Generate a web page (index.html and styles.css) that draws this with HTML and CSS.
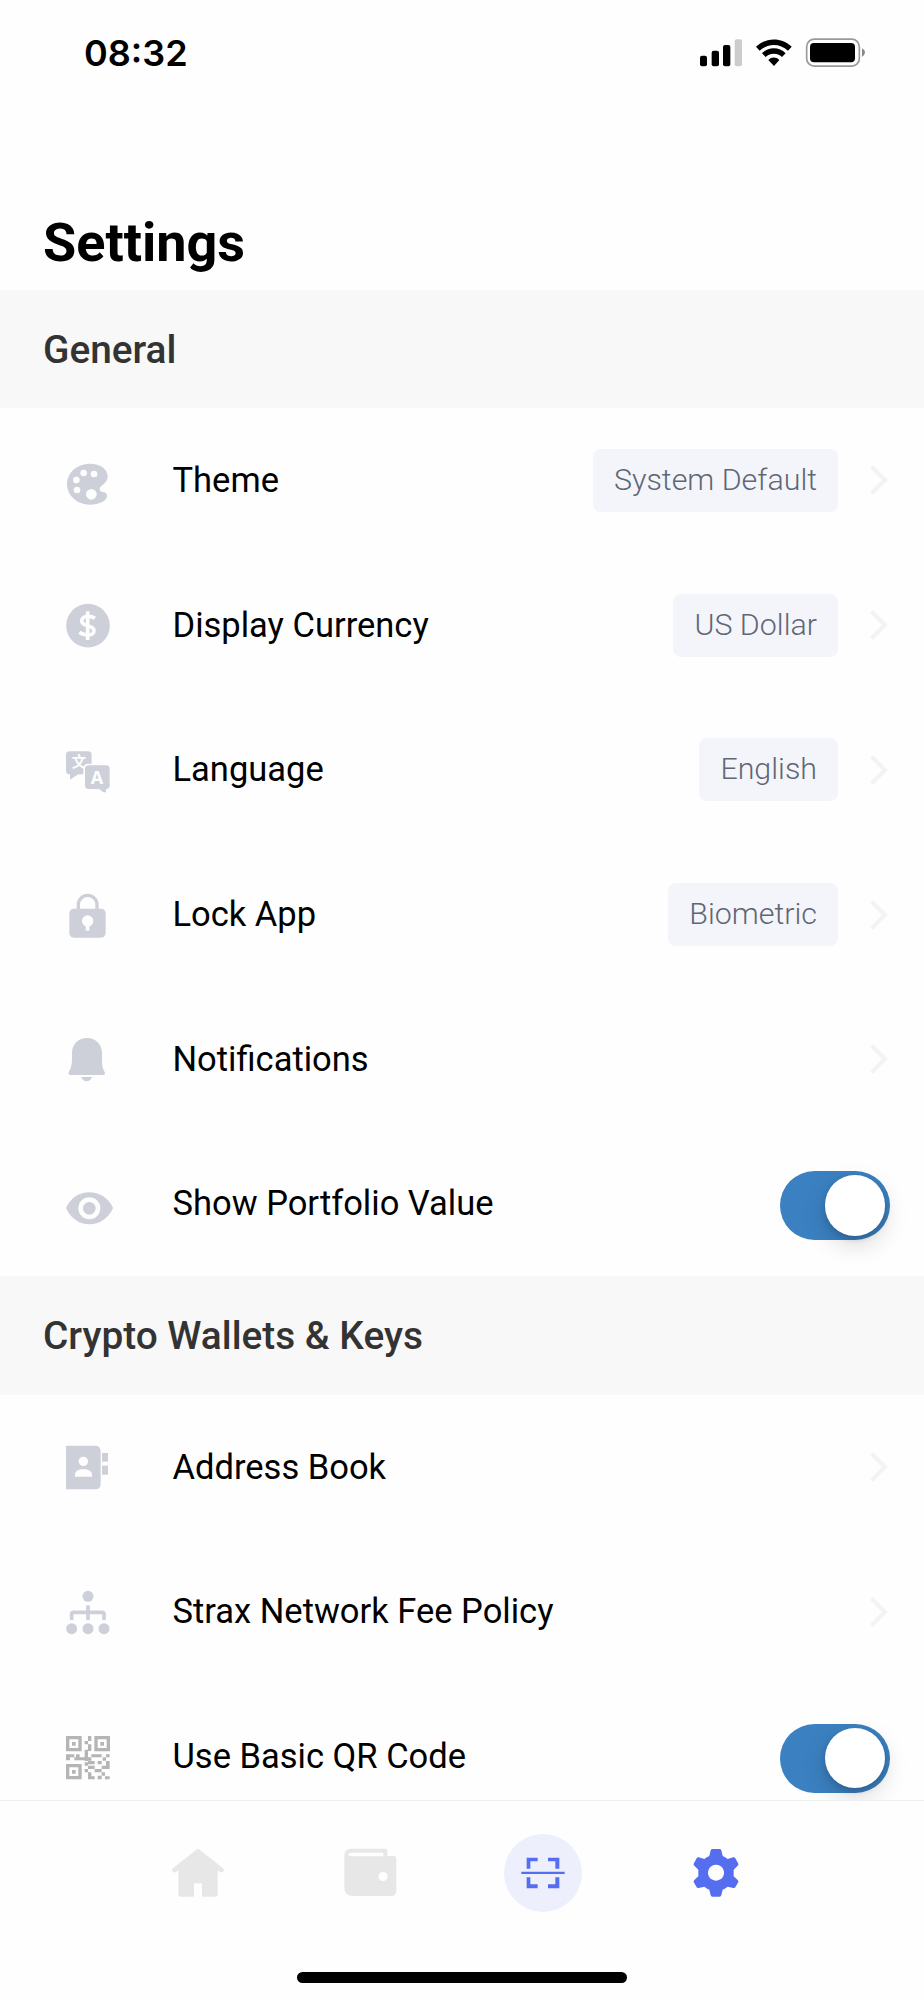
FILE: index.html
```
<!DOCTYPE html>
<html lang="en">
<head>
  <meta charset="UTF-8" />
  <meta name="viewport" content="width=device-width, initial-scale=1.0" />
  <title>Settings</title>
  <link rel="stylesheet" href="styles.css">
</head>
<body>
  <div class="app">
    <header class="status-bar">
      <span class="time">08:32</span>
      <svg class="status-icons" viewBox="420 110 498 96">
        <rect x="420" y="166" width="21" height="32" rx="6" />
        <rect x="455" y="151" width="22" height="47" rx="6" />
        <rect x="489" y="134" width="22" height="64" rx="6" />
        <rect x="524" y="117" width="22" height="81" rx="6" fill="#ccc" />
        <path d="M588 139 C618 110 665 110 695 139 L684 151 C660 128 623 128 599 151Z" />
        <path d="M606 159 C626 139 657 139 677 159 L666 170 C652 157 631 157 617 170Z" />
        <path d="M625 179 C634 169 649 169 658 179 L642 197Z" />
        <rect x="740" y="116.500" width="158" height="81" rx="23" fill="none" stroke="#999" stroke-width="5" />
        <rect x="750" y="128" width="135" height="58" rx="12" />
        <path d="M906 144 Q915 148 915 156 Q915 164 906 169Z" fill="#888" />
      </svg>
    </header>

    <h1 class="title">Settings</h1>

    <main class="content">
      <h2 class="section-title">General</h2>
      <ul class="list">
        <li class="row">
          <svg class="icon" viewBox="78 31 144 180">
            <path d="M150 72 C112 72 81 98 81 134 C81 168 112 195 150 195 C175 195 201 184 201 168 C201 160 196 158 189 157 C179 156 176 147 182 141 C192 132 203 126 203 110 C203 88 180 72 150 72Z" />
            <g class="hole">
              <circle cx="131" cy="100" r="10" />
              <circle cx="162" cy="103" r="10" />
              <circle cx="109" cy="121" r="10" />
              <circle cx="111" cy="151" r="10" />
              <circle cx="154" cy="164" r="16" />
            </g>
          </svg>
          <span class="label">Theme</span>
          <span class="value">System Default</span>
          <svg class="chevron" viewBox="0 0 18 30"><path d="M1.500 1.500 L15 15 L1.500 28.500" /></svg>
        </li>
        <li class="row">
          <svg class="icon" viewBox="78 465 144 180">
            <circle cx="144" cy="557" r="65.500" />
            <path class="cut" stroke-width="11" d="M165 535 C158 530 150 529 143 529 C132 529 125 535 125 542 C125 552 135 554 143 557 C154 560 162 563 162 572 C162 581 152 585 143 585 C133 585 126 582 118 577" />
            <path class="cut" stroke-width="11" d="M143 514 V600" />
          </svg>
          <span class="label">Display Currency</span>
          <span class="value">US Dollar</span>
          <svg class="chevron" viewBox="0 0 18 30"><path d="M1.500 1.500 L15 15 L1.500 28.500" /></svg>
        </li>
        <li class="row">
          <svg class="icon" viewBox="78 899 144 180">
            <rect x="78" y="933" width="77" height="69" rx="11" />
            <path d="M90 998 V1018 L117 1000Z" />
            <text class="glyph cjk" x="117" y="981">文</text>
            <rect class="hole" x="130" y="970" width="84" height="81" rx="14" />
            <rect x="135" y="975" width="74" height="71" rx="11" />
            <path d="M174 1044 L190 1056 H198 V1044Z" />
            <text class="glyph" x="171" y="1030">A</text>
          </svg>
          <span class="label">Language</span>
          <span class="value">English</span>
          <svg class="chevron" viewBox="0 0 18 30"><path d="M1.500 1.500 L15 15 L1.500 28.500" /></svg>
        </li>
        <li class="row">
          <svg class="icon" viewBox="78 43 144 180">
            <path class="line" stroke-width="10" d="M115 118 V102 a28 28 0 0 1 56 0 V118" />
            <rect x="88" y="114" width="109" height="87" rx="14" />
            <g class="hole">
              <circle cx="143" cy="151" r="17" />
              <rect x="137" y="160" width="11" height="20" />
            </g>
          </svg>
          <span class="label">Lock App</span>
          <span class="value">Biometric</span>
          <svg class="chevron" viewBox="0 0 18 30"><path d="M1.500 1.500 L15 15 L1.500 28.500" /></svg>
        </li>
        <li class="row">
          <svg class="icon" viewBox="78 477 144 180">
            <path d="M141 504 C115 504 96 523 96 549 V565 C96 588 92 596 86 606 Q84 614 91 615 H190 Q197 614 194 606 C188 596 186 588 186 565 V549 C186 523 167 504 141 504Z" />
            <path d="M123 621 H157 C153 629 147 634 140 634 C133 634 127 629 123 621Z" />
          </svg>
          <span class="label">Notifications</span>
          <svg class="chevron" viewBox="0 0 18 30"><path d="M1.500 1.500 L15 15 L1.500 28.500" /></svg>
        </li>
        <li class="row">
          <svg class="icon" viewBox="78 911 144 180">
            <path d="M78 1013 C92 983 118 966 148 966 C178 966 205 983 219 1013 C205 1044 178 1062 148 1062 C118 1062 92 1044 78 1013Z" />
            <circle class="hole" cx="148" cy="1014" r="33" />
            <circle cx="148" cy="1014" r="19" />
          </svg>
          <span class="label">Show Portfolio Value</span>
          <span class="toggle"><span class="thumb"></span></span>
        </li>
      </ul>

      <h2 class="section-title">Crypto Wallets &amp; Keys</h2>
      <ul class="list">
        <li class="row">
          <svg class="icon" viewBox="198 532 144 180">
            <path d="M198 558 H286 Q302 558 302 575 V672 Q302 689 286 689 H198Z" />
            <rect x="306" y="580" width="18" height="26" />
            <rect x="306" y="618" width="18" height="27" />
            <g class="hole">
              <circle cx="250" cy="605" r="14" />
              <path d="M225 651 V645 C225 635 235 629 250 629 C265 629 276 635 276 645 V651Z" />
            </g>
          </svg>
          <span class="label">Address Book</span>
          <svg class="chevron" viewBox="0 0 18 30"><path d="M1.500 1.500 L15 15 L1.500 28.500" /></svg>
        </li>
        <li class="row">
          <svg class="icon" viewBox="78 66 144 180">
            <circle cx="144" cy="109" r="16.500" />
            <circle cx="95" cy="206" r="16.500" />
            <circle cx="144" cy="206" r="16.500" />
            <circle cx="192" cy="206" r="16.500" />
            <path class="line" stroke-width="11" d="M95 180 V163 Q95 157 101 157 H187 Q192 157 192 163 V180 M144 136 V180" />
          </svg>
          <span class="label">Strax Network Fee Policy</span>
          <svg class="chevron" viewBox="0 0 18 30"><path d="M1.500 1.500 L15 15 L1.500 28.500" /></svg>
        </li>
        <li class="row">
          <svg class="icon qr" viewBox="78 500 144 180">
            <path class="line" stroke-width="10" d="M83 532 H120 V568 H83Z M168 532 H205 V568 H168Z M83 616 H120 V652 H83Z" />
            <path d="M96 545h11v11h-11z M181 545h11v11h-11z M96 629h11v11h-11z" />
            <path d="M144 527h10v15h-10z M134 542h10v10h-10z M144 552h10v20h-10z M134 568h10v34h-10z M78 582h25v9h-25z M78 591h12v9h-12z M108 582h11v9h-11z M103 591h31v9h-31z M154 582h31v9h-31z M144 591h10v10h-10z M198 582h11v9h-11z M188 591h10v10h-10z" />
            <path d="M144 602h20v10h-20z M134 606h10v10h-10z M173 602h12v10h-12z M198 602h11v24h-11z M185 616h13v10h-13z M144 616h20v10h-20z M164 626h21v10h-21z M134 626h10v10h-10z M144 636h10v21h-10z M154 648h10v9h-10z M185 636h10v10h-10z M173 646h12v11h-12z M195 648h14v9h-14z" />
          </svg>
          <span class="label">Use Basic QR Code</span>
          <span class="toggle"><span class="thumb"></span></span>
        </li>
      </ul>
    </main>

    <footer class="tab-bar">
      <nav class="tabs">
        <a class="tab">
          <svg width="52" height="48" viewBox="66 176 156 144">
            <path d="M139 178 Q144 174 149 178 L219 234 Q224 239 220 244 Q216 248 210 245 L203 240 V313 Q203 319 197 319 H156 V279 H132 V319 H91 Q85 319 85 313 V240 L78 245 Q72 248 68 244 Q64 239 69 234Z" />
          </svg>
        </a>
        <a class="tab">
          <svg width="52" height="48" viewBox="584 177 156 144">
            <path fill-rule="evenodd" d="M600 176 H706 Q711 176 711 182 V198 H732 Q738 198 738 205 V303 Q738 318 723 318 H606 Q582 316 582 293 V194 Q583 178 600 176Z M600 188 Q594 189 594 194 Q595 199 602 199 H699 V188Z M698 246 a13.500 13.500 0 1 0 .1 0Z" />
          </svg>
        </a>
        <a class="tab">
          <span class="scan">
            <svg width="44" height="32" viewBox="184 202 132 96">
              <path d="M201 204 H234 V215 H212 V237 H201Z M265 204 H299 V237 H287 V215 H265Z M201 263 H212 V284 H234 V296 H201Z M287 263 H299 V296 H265 V284 H287Z M185 246 H315 V253 H185Z" />
            </svg>
          </span>
        </a>
        <a class="tab active">
          <svg width="46" height="48" viewBox="699 176 138 144">
            <path fill-rule="evenodd" d="M757 176 H779 Q783 176 784 180 L788 197 Q796 200 803 206 L820 201 Q824 200 826 204 L835 220 Q836 224 833 226 L821 238 V258 L833 269 Q836 272 835 275 L826 291 Q824 294 820 293 L803 289 Q796 295 788 298 L784 315 Q783 319 779 319 H757 Q753 319 752 315 L748 298 Q740 295 733 289 L716 293 Q712 294 710 291 L701 275 Q700 272 703 269 L715 258 V238 L703 226 Q700 224 701 220 L710 204 Q712 200 716 201 L733 206 Q740 200 748 197 L752 180 Q753 176 757 176Z M768 223 a24 24 0 1 0 .1 0Z" />
          </svg>
        </a>
      </nav>
      <div class="home-indicator"></div>
    </footer>
  </div>
</body>
</html>
```
FILE: styles.css
```
* {
  box-sizing: border-box;
}
body {
  margin: 0;
  background: #fefefe;
  font-family: Roboto, "Liberation Sans", sans-serif;
  color: #000;
}
.app {
  display: flex;
  flex-direction: column;
  width: 924px;
  height: 2000px;
  overflow: hidden;
}
.status-bar {
  display: flex;
  justify-content: space-between;
  align-items: center;
  flex: none;
  height: 105px;
  padding: 0 58px 0 84px;
}
.time {
  font-family: Inter, sans-serif;
  font-size: 36px;
  font-weight: 600;
}
.status-icons {
  width: 166px;
  height: 32px;
}
.title {
  flex: none;
  height: 184.500px;
  margin: 0;
  padding: 106px 0 0 43px;
  font-size: 54px;
  line-height: 64px;
  font-weight: 700;
}
.content {
  flex: 1;
  min-height: 0;
  overflow: hidden;
}
.section-title {
  height: 118.500px;
  margin: 0;
  padding-left: 43px;
  background: #f8f8f8;
  color: #333;
  font-size: 38.800px;
  font-weight: 500;
  line-height: 119px;
}
.list {
  list-style: none;
  margin: 0;
  padding: 0;
}
.row {
  display: flex;
  align-items: center;
  height: 144.720px;
  padding: 0 36px 0 66px;
}
.icon {
  flex: none;
  width: 48px;
  height: 60px;
  fill: #cdd0d9;
}
.icon .hole {
  fill: #fefefe;
}
.icon .line {
  fill: none;
  stroke: #cdd0d9;
}
.icon .cut {
  fill: none;
  stroke: #fefefe;
}
.icon .glyph {
  fill: #fefefe;
  font-family: "Open Sans", sans-serif;
  font-size: 54px;
  font-weight: 700;
  text-anchor: middle;
}
.icon .cjk {
  font-family: "Noto Sans CJK SC", sans-serif;
  font-size: 43px;
}
.icon.qr {
  fill: #b5b5b5;
}
.icon.qr .line {
  stroke: #b5b5b5;
}
.label {
  flex: 1;
  margin-left: 58.500px;
  padding-bottom: 1px;
  font-size: 34.500px;
}
.value {
  height: 63px;
  padding: 0 21px;
  border-radius: 8px;
  background: #f4f5fb;
  color: #5f6775;
  font-size: 30.400px;
  font-weight: 300;
  line-height: 62px;
}
.chevron {
  flex: none;
  width: 18px;
  height: 30px;
  margin-left: 32px;
  fill: none;
  stroke: #f3f3f3;
  stroke-width: 4;
}
.toggle {
  display: flex;
  justify-content: flex-end;
  align-items: center;
  width: 110px;
  height: 69px;
  margin: 3px -1.500px 0 0;
  padding-right: 4.500px;
  border-radius: 35px;
  background: #3b80c0;
}
.thumb {
  width: 60.500px;
  height: 60.500px;
  border-radius: 50%;
  background: #fff;
  box-shadow: 0 9px 24px rgba(0, 0, 0, 0.15), 0 3px 6px rgba(0, 0, 0, 0.15);
}
.tab-bar {
  display: flex;
  flex-direction: column;
  align-items: center;
  flex: none;
  height: 200px;
  border-top: 1px solid #efefef;
  background: #fefefe;
}
.tabs {
  display: grid;
  grid-template-columns: repeat(4, 172.700px);
  width: 100%;
  height: 143px;
  padding-left: 111.600px;
}
.tab {
  display: flex;
  justify-content: center;
  align-items: center;
  fill: #e7e7e7;
}
.tab svg {
  overflow: visible;
}
.tab.active {
  fill: #556ef0;
}
.scan {
  display: flex;
  justify-content: center;
  align-items: center;
  width: 78px;
  height: 78px;
  border-radius: 50%;
  background: #edeffc;
  fill: #556ef0;
}
.home-indicator {
  width: 330px;
  height: 11px;
  margin-top: 28px;
  border-radius: 6px;
  background: #000;
}
```
